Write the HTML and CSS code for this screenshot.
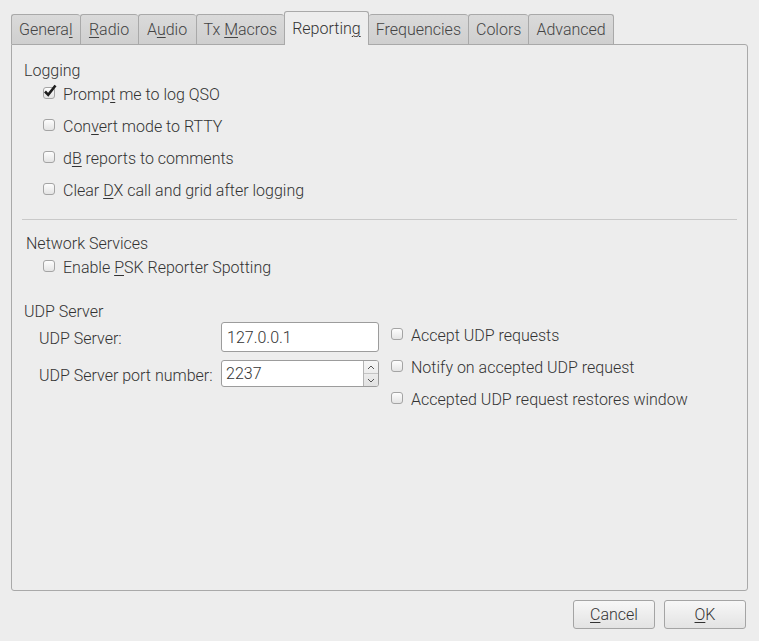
FILE: index.html
```html
<!DOCTYPE html>
<html>
<head>
    <title>Settings</title>
    <link rel="stylesheet" href="styles.css">
</head>
<body>
    <div class="dialog">
        <div class="tabs">
            <div class="tab">Genera<u>l</u></div>
            <div class="tab"><u>R</u>adio</div>
            <div class="tab">A<u>u</u>dio</div>
            <div class="tab">Tx <u>M</u>acros</div>
            <div class="tab active">Reportin<u>g</u></div>
            <div class="tab">Frequencies</div>
            <div class="tab">Colors</div>
            <div class="tab last">Advanced</div>
        </div>

        <div class="pane">
            <div class="group-title">Logging</div>
            <div class="checks">
                <label class="check"><span class="box checked"><svg viewBox="0 0 14 14" width="14" height="14"><path d="M2 7.5 L5.2 10.8 L12.5 1.5" fill="none" stroke="#1e1e1e" stroke-width="2.6"/></svg></span><span>Promp<u>t</u> me to log QSO</span></label>
                <label class="check"><span class="box"></span><span>Con<u>v</u>ert mode to RTTY</span></label>
                <label class="check"><span class="box"></span><span>d<u>B</u> reports to comments</span></label>
                <label class="check"><span class="box"></span><span>Clear <u>D</u>X call and grid after logging</span></label>
            </div>

            <div class="separator"></div>

            <div class="group-title network">Network Services</div>
            <div class="checks single">
                <label class="check"><span class="box"></span><span>Enable <u>P</u>SK Reporter Spotting</span></label>
            </div>

            <div class="group-title udp-title">UDP Server</div>
            <div class="udp">
                <div class="udp-fields">
                    <span class="field-label">UDP Server:</span>
                    <div class="text-input">127.0.0.1</div>
                    <span class="field-label port">UDP Server port number:</span>
                    <div class="spin">
                        <span class="spin-value">2237</span>
                        <span class="spin-buttons">
                            <span class="arrow"><svg viewBox="0 0 8 5" width="8" height="5"><path d="M1 4 L4 1 L7 4" fill="none" stroke="#555" stroke-width="1"/></svg></span>
                            <span class="arrow"><svg viewBox="0 0 8 5" width="8" height="5"><path d="M1 1 L4 4 L7 1" fill="none" stroke="#555" stroke-width="1"/></svg></span>
                        </span>
                    </div>
                </div>
                <div class="checks udp-checks">
                    <label class="check"><span class="box"></span><span>Accept UDP requests</span></label>
                    <label class="check"><span class="box"></span><span>Notify on accepted UDP request</span></label>
                    <label class="check"><span class="box"></span><span>Accepted UDP request restores window</span></label>
                </div>
            </div>
        </div>

        <div class="buttons">
            <button class="btn"><u>C</u>ancel</button>
            <button class="btn"><u>O</u>K</button>
        </div>
    </div>
</body>
</html>
```

FILE: styles.css
```css
body {
    margin: 0;
    background-color: #ededed;
    font-family: Roboto, "Liberation Sans", sans-serif;
    font-size: 16px;
    font-weight: 300;
    color: #333333;
}

u {
    text-decoration-thickness: 1px;
    text-underline-offset: 2px;
}

.dialog {
    padding: 11px 11px 0 11px;
}

/* tab bar */
.tabs {
    display: flex;
    align-items: flex-start;
    height: 33px;
}

.tab {
    box-sizing: border-box;
    min-width: 58px;
    height: 30px;
    margin-top: 3px;
    padding: 0 7px;
    line-height: 30px;
    text-align: center;
    border: 1px solid #a9a9a9;
    border-right: none;
    border-bottom: none;
    border-radius: 3px 3px 0 0;
    background: linear-gradient(#dadada, #cfcfcf);
    color: #444444;
}

.tab.last {
    border-right: 1px solid #a9a9a9;
}

.tab.active {
    position: relative;
    z-index: 1;
    height: 34px;
    margin-top: 0;
    line-height: 34px;
    border-right: 1px solid #a9a9a9;
    background: #ededed;
    color: #333333;
}

.tab.active + .tab {
    border-left: none;
}

.pane {
    height: 545px;
    padding: 0 10px;
    border: 1px solid #a9a9a9;
    border-radius: 0 3px 3px 3px;
}

.group-title {
    margin: 16px 0 0 2px;
    line-height: 20px;
}

.group-title.network {
    margin: 14px 0 0 4px;
}

.group-title.udp-title {
    margin-top: 24px;
}

/* checkboxes */
.checks {
    display: flex;
    flex-direction: column;
    gap: 12px;
    margin: 4px 0 0 21px;
}

.check {
    display: flex;
    align-items: center;
    height: 20px;
    line-height: 20px;
}

.box {
    position: relative;
    box-sizing: border-box;
    width: 12px;
    height: 12px;
    margin: -4px 8px 0 0;
    border: 1px solid #a4a4a4;
    border-radius: 3px;
    background: linear-gradient(#fdfdfd, #e4e4e4);
}

.box svg {
    position: absolute;
    left: -1px;
    top: -4px;
}

.separator {
    height: 1px;
    margin-top: 18px;
    background-color: #c9c9c9;
}

/* udp server block */
.udp {
    display: flex;
    align-items: flex-start;
}

.udp-fields {
    display: grid;
    grid-template-columns: 182px 158px;
    row-gap: 8px;
    align-items: center;
    margin-left: 17px;
}

.field-label {
    position: relative;
    top: 1px;
}

.field-label.port {
    top: 2px;
}

.text-input {
    box-sizing: border-box;
    height: 30px;
    padding: 0 5px;
    line-height: 29px;
    border: 1px solid #9c9c9c;
    border-radius: 3px;
    background: #ffffff;
}

.spin {
    display: flex;
    box-sizing: border-box;
    height: 27px;
    border: 1px solid #9c9c9c;
    border-radius: 3px;
    background: #ffffff;
}

.spin-value {
    flex: 1;
    padding: 0 4px;
    line-height: 26px;
}

.spin-buttons {
    display: flex;
    flex-direction: column;
    width: 14px;
    border-left: 1px solid #b4b4b4;
    background: linear-gradient(#f6f6f6, #e2e2e2);
    border-radius: 0 2px 2px 0;
}

.arrow {
    flex: 1;
    display: flex;
    align-items: center;
    justify-content: center;
}

.arrow + .arrow {
    border-top: 1px solid #c4c4c4;
}

.udp-checks {
    margin: 4px 0 0 12px;
}

/* dialog buttons */
.buttons {
    display: flex;
    justify-content: flex-end;
    gap: 9px;
    margin: 9px 2px 0 0;
}

.btn {
    width: 82px;
    height: 29px;
    padding: 0;
    font-family: Roboto, "Liberation Sans", sans-serif;
    font-size: 16px;
    font-weight: 300;
    color: #333333;
    border: 1px solid #a4a4a4;
    border-radius: 3px;
    background: linear-gradient(#f7f7f7, #e3e3e3);
}
```
